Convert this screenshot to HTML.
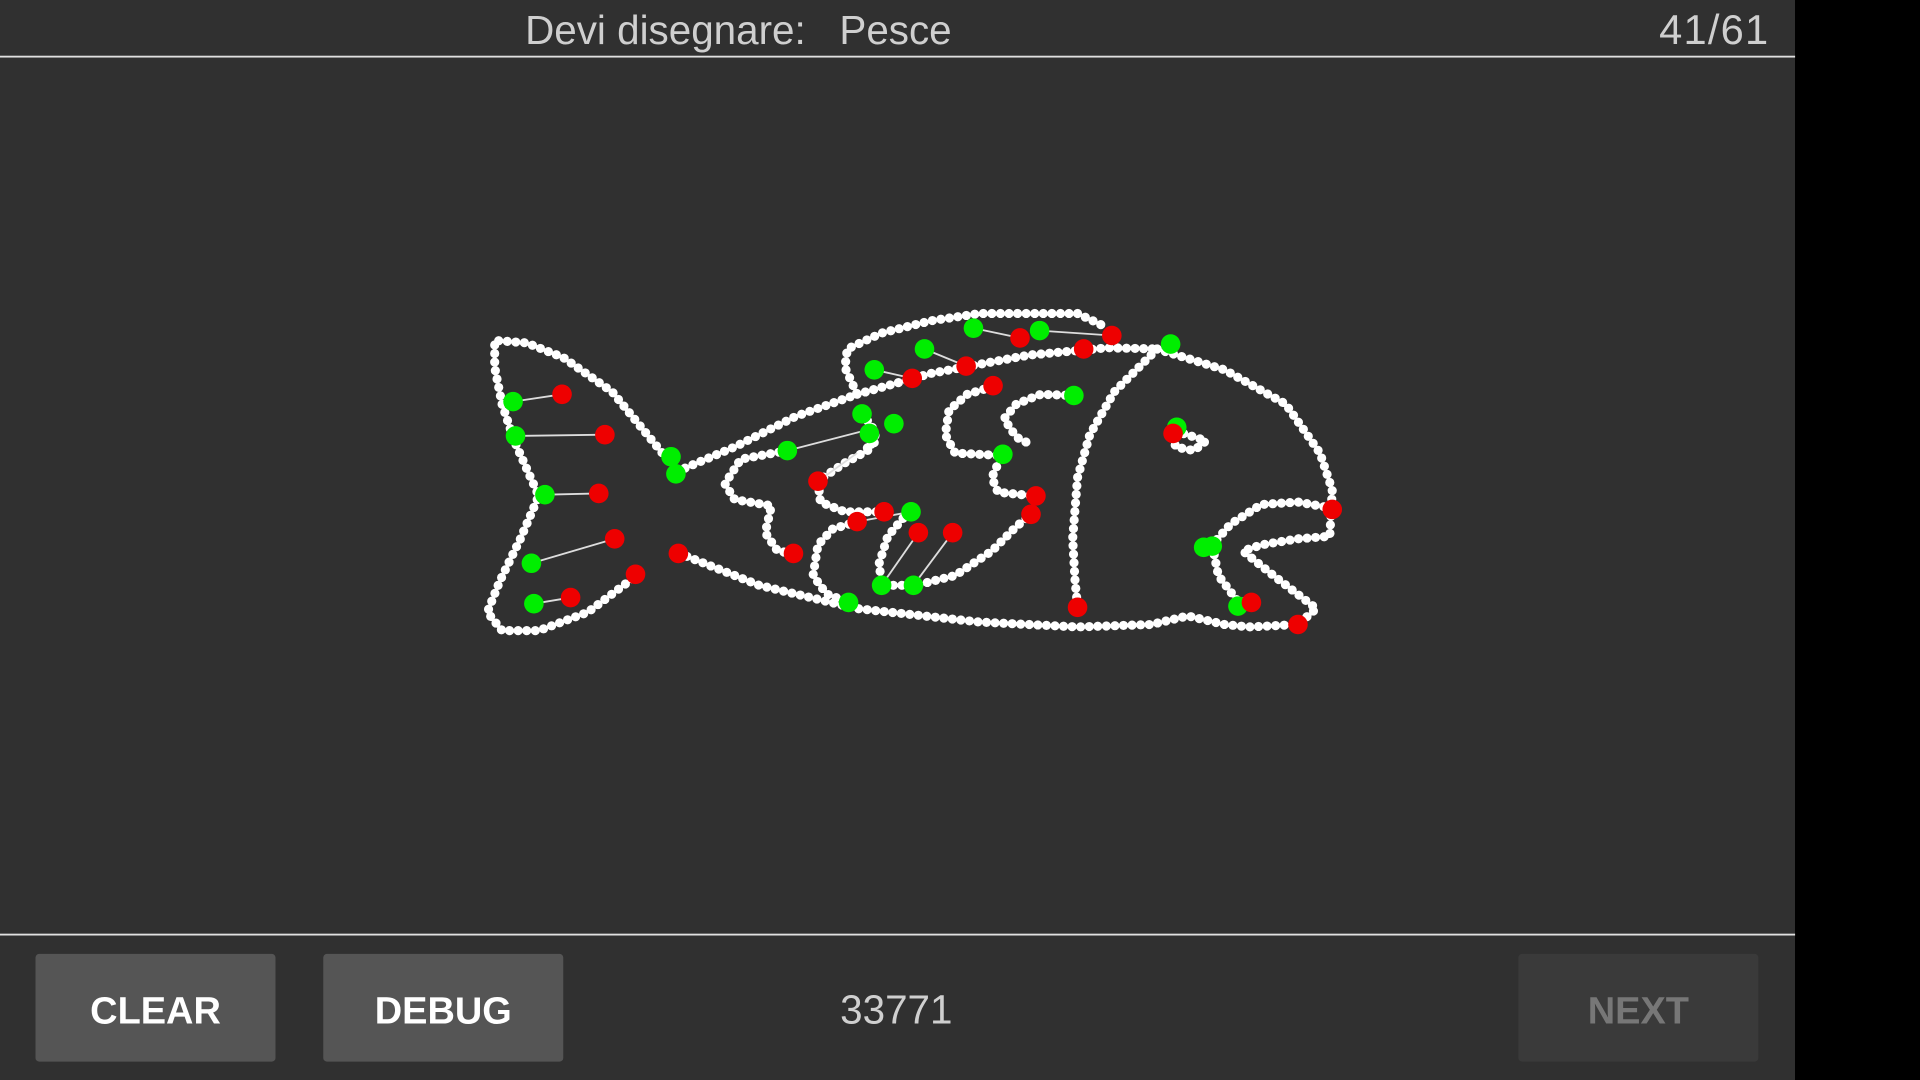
<!DOCTYPE html>
<html><head><meta charset="utf-8"><style>
html,body{margin:0;padding:0;width:1920px;height:1080px;overflow:hidden;background:#000;font-family:"Liberation Sans",sans-serif}
</style></head><body>
<svg width="1920" height="1080" viewBox="0 0 1568 882" xmlns="http://www.w3.org/2000/svg" style="display:block">
<rect x="0" y="0" width="1466" height="882" fill="#303030"/>
<rect x="1466" y="0" width="102" height="882" fill="#000"/>
<rect x="0" y="45.5" width="1466" height="1.5" fill="#e0e0e0"/>
<rect x="0" y="762.5" width="1466" height="1.5" fill="#e0e0e0"/>
<text x="603" y="36" font-size="33" fill="#cfcfcf" text-anchor="middle" font-family="Liberation Sans,sans-serif" xml:space="preserve">Devi disegnare:   Pesce</text>
<text x="1445" y="36" font-size="34" fill="#cfcfcf" text-anchor="end" font-family="Liberation Sans,sans-serif" letter-spacing="1">41/61</text>
<rect x="29" y="779" width="196" height="88" rx="3" fill="#555"/>
<rect x="264" y="779" width="196" height="88" rx="3" fill="#555"/>
<rect x="1240" y="779" width="196" height="88" rx="3" fill="#3a3a3a"/>
<text x="127" y="836" font-size="31" font-weight="bold" fill="#fff" text-anchor="middle">CLEAR</text>
<text x="362" y="836" font-size="31" font-weight="bold" fill="#fff" text-anchor="middle">DEBUG</text>
<text x="1338" y="836" font-size="31" font-weight="bold" fill="#777" text-anchor="middle">NEXT</text>
<text x="732" y="836" font-size="33" fill="#cfcfcf" text-anchor="middle">33771</text>
<g fill="none" stroke="#fff" stroke-width="7.5" stroke-linecap="round" stroke-linejoin="round" stroke-dasharray="0 7">
<path d="M545,375 L500,320 L460,292 L430,280 L404,278 L404,300 L410,330 L420,360 L440,405 L425,440 L408,475 L398,500 L410,515 L440,515 L480,500 L520,470"/>
<path d="M553,385 L600,365 L650,340 L700,322 L690,300 L692,285 L720,272 L760,262 L800,256 L880,256 L905,268"/>
<path d="M700,322 L760,305 L840,290 L905,284 L945,285"/>
<path d="M945,285 L1000,302 L1050,330 L1078,370 L1088,400 L1086,438 L1060,440 L1030,445 L1015,450 L1040,470 L1075,497 L1060,510 L1020,512 L1000,510 L970,503 L940,510 L880,512 L800,508 L700,497 L620,478 L555,452"/>
<path d="M945,285 L910,320 L890,355 L880,390 L876,440 L878,475 L880,495"/>
<path d="M1088,415 L1060,410 L1030,412 L1005,428 L990,445 L995,470 L1010,490 L1022,492"/>
<path d="M960,352 L985,360 L975,368 L960,365 L958,352"/>
<path d="M643,368 L605,375 L592,395 L600,408 L630,413 L625,435 L635,450 L648,452"/>
<path d="M710,356 L712,366 L690,378 L675,388 L668,393 L670,410 L690,418 L722,418"/>
<path d="M700,426 L680,432 L668,445 L664,470 L675,485 L693,492"/>
<path d="M742,418 L725,438 L718,460 L720,478 L748,478 L780,470 L810,450 L830,430 L842,420"/>
<path d="M810,316 L790,322 L775,335 L772,355 L780,370 L818,372 L810,390 L815,402 L845,405"/>
<path d="M877,323 L850,322 L830,330 L820,342 L830,357 L840,362"/>
<path d="M704,338 L712,348 L716,360 L708,366"/>
</g>
<g stroke="#ddd" stroke-width="1.5">
<line x1="419" y1="328" x2="459" y2="322"/><line x1="421" y1="356" x2="494" y2="355"/><line x1="445" y1="404" x2="489" y2="403"/><line x1="434" y1="460" x2="502" y2="440"/><line x1="436" y1="493" x2="466" y2="488"/>
<line x1="714" y1="302" x2="745" y2="309"/><line x1="755" y1="285" x2="789" y2="299"/><line x1="795" y1="268" x2="833" y2="276"/><line x1="849" y1="270" x2="908" y2="274"/>
<line x1="643" y1="368" x2="705" y2="352"/><line x1="668" y1="393" x2="700" y2="370"/><line x1="744" y1="418" x2="700" y2="426"/><line x1="750" y1="435" x2="720" y2="478"/><line x1="778" y1="435" x2="746" y2="478"/>
</g>
<g fill="#00ee00">
<circle cx="419" cy="328" r="8"/><circle cx="421" cy="356" r="8"/><circle cx="445" cy="404" r="8"/><circle cx="434" cy="460" r="8"/><circle cx="436" cy="493" r="8"/>
<circle cx="548" cy="373" r="8"/><circle cx="552" cy="387" r="8"/><circle cx="714" cy="302" r="8"/><circle cx="755" cy="285" r="8"/><circle cx="795" cy="268" r="8"/><circle cx="849" cy="270" r="8"/><circle cx="956" cy="281" r="8"/>
<circle cx="704" cy="338" r="8"/><circle cx="710" cy="354" r="8"/><circle cx="730" cy="346" r="8"/><circle cx="643" cy="368" r="8"/><circle cx="877" cy="323" r="8"/><circle cx="819" cy="371" r="8"/>
<circle cx="744" cy="418" r="8"/><circle cx="720" cy="478" r="8"/><circle cx="746" cy="478" r="8"/><circle cx="693" cy="492" r="8"/>
<circle cx="961" cy="349" r="8"/><circle cx="983" cy="447" r="8"/><circle cx="990" cy="446" r="8"/><circle cx="1011" cy="495" r="8"/>
</g>
<g fill="#ee0000">
<circle cx="459" cy="322" r="8"/><circle cx="494" cy="355" r="8"/><circle cx="489" cy="403" r="8"/><circle cx="502" cy="440" r="8"/><circle cx="466" cy="488" r="8"/><circle cx="519" cy="469" r="8"/><circle cx="554" cy="452" r="8"/>
<circle cx="745" cy="309" r="8"/><circle cx="789" cy="299" r="8"/><circle cx="833" cy="276" r="8"/><circle cx="908" cy="274" r="8"/><circle cx="885" cy="285" r="8"/><circle cx="811" cy="315" r="8"/>
<circle cx="668" cy="393" r="8"/><circle cx="648" cy="452" r="8"/><circle cx="700" cy="426" r="8"/><circle cx="722" cy="418" r="8"/><circle cx="750" cy="435" r="8"/><circle cx="778" cy="435" r="8"/><circle cx="846" cy="405" r="8"/><circle cx="842" cy="420" r="8"/>
<circle cx="958" cy="354" r="8"/><circle cx="880" cy="496" r="8"/><circle cx="1088" cy="416" r="8"/><circle cx="1022" cy="492" r="8"/><circle cx="1060" cy="510" r="8"/>
</g>
</svg>
</body></html>
